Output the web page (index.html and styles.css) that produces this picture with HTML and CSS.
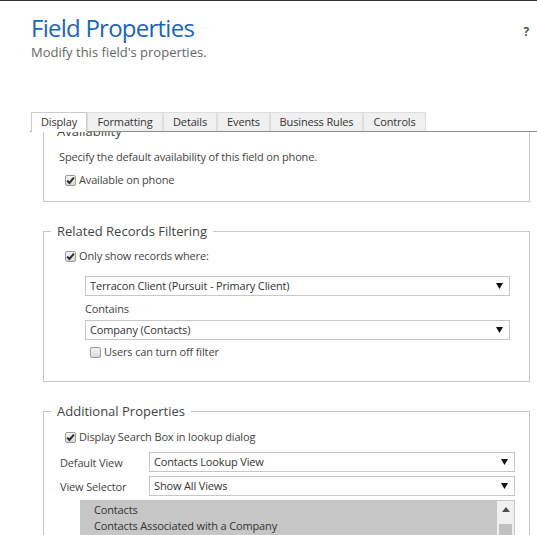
FILE: index.html
```html
<!DOCTYPE html>
<html>
<head>
<meta charset="utf-8">
<link rel="stylesheet" href="styles.css">
</head>
<body>
<div class="page">
  <header class="header">
    <div class="titles">
      <h1 class="title">Field Properties</h1>
      <p class="subtitle">Modify this field's properties.</p>
    </div>
    <span class="help">?</span>
  </header>

  <div class="tabs">
    <div class="tab tab-active tab-display">Display</div>
    <div class="tab tab-formatting">Formatting</div>
    <div class="tab tab-details">Details</div>
    <div class="tab tab-events">Events</div>
    <div class="tab tab-rules">Business Rules</div>
    <div class="tab tab-controls">Controls</div>
  </div>

  <div class="panel">
    <div class="scroller">
      <fieldset class="group group-availability">
        <legend class="legend">Availability</legend>
        <p class="note">Specify the default availability of this field on phone.</p>
        <label class="check check-phone">
          <span class="box box-checked"><svg viewBox="0 0 11 11" width="11" height="11"><path d="M2.2 5.6 L4.4 8 L8.9 2.6" fill="none" stroke="#2b2b2b" stroke-width="2"/></svg></span>
          <span>Available on phone</span>
        </label>
      </fieldset>

      <fieldset class="group group-filter">
        <legend class="legend">Related Records Filtering</legend>
        <label class="check check-only">
          <span class="box box-checked"><svg viewBox="0 0 11 11" width="11" height="11"><path d="M2.2 5.6 L4.4 8 L8.9 2.6" fill="none" stroke="#2b2b2b" stroke-width="2"/></svg></span>
          <span>Only show records where:</span>
        </label>
        <div class="filter-body">
          <div class="select">
            <span>Terracon Client (Pursuit - Primary Client)</span>
            <svg class="arrow" viewBox="0 0 7 6" width="7" height="6"><path d="M0 0 H7 L3.5 6 Z" fill="#111"/></svg>
          </div>
          <div class="label-contains">Contains</div>
          <div class="select">
            <span>Company (Contacts)</span>
            <svg class="arrow" viewBox="0 0 7 6" width="7" height="6"><path d="M0 0 H7 L3.5 6 Z" fill="#111"/></svg>
          </div>
          <label class="check check-small">
            <span class="box"></span>
            <span>Users can turn off filter</span>
          </label>
        </div>
      </fieldset>

      <fieldset class="group group-additional">
        <legend class="legend">Additional Properties</legend>
        <label class="check check-search">
          <span class="box box-checked"><svg viewBox="0 0 11 11" width="11" height="11"><path d="M2.2 5.6 L4.4 8 L8.9 2.6" fill="none" stroke="#2b2b2b" stroke-width="2"/></svg></span>
          <span>Display Search Box in lookup dialog</span>
        </label>
        <div class="form-row">
          <span class="form-label">Default View</span>
          <div class="select select-wide">
            <span>Contacts Lookup View</span>
            <svg class="arrow" viewBox="0 0 7 6" width="7" height="6"><path d="M0 0 H7 L3.5 6 Z" fill="#111"/></svg>
          </div>
        </div>
        <div class="form-row">
          <span class="form-label">View Selector</span>
          <div class="select select-wide">
            <span>Show All Views</span>
            <svg class="arrow" viewBox="0 0 7 6" width="7" height="6"><path d="M0 0 H7 L3.5 6 Z" fill="#111"/></svg>
          </div>
        </div>
        <div class="listbox">
          <ul class="list">
            <li>Contacts</li>
            <li>Contacts Associated with a Company</li>
            <li>Contacts Being Followed</li>
            <li>Contacts: No Campaign Activities in Last 3 Months</li>
          </ul>
          <div class="scrollbar">
            <svg class="scroll-up" viewBox="0 0 8 5" width="8" height="5"><path d="M0 5 H8 L4 0 Z" fill="#505050"/></svg>
            <div class="thumb"></div>
          </div>
        </div>
      </fieldset>
    </div>
  </div>
</div>
</body>
</html>
```

FILE: styles.css
```css
html, body {
  margin: 0;
  padding: 0;
  background: #fff;
}

body {
  font-family: "Open Sans", "Noto Sans", sans-serif;
  color: #444;
  font-size: 11px;
  letter-spacing: -0.15px;
}

.page {
  width: 537px;
  height: 535px;
  border-top: 1px solid #333;
  box-sizing: border-box;
  overflow: hidden;
  display: flex;
  flex-direction: column;
}

.header {
  display: flex;
  justify-content: space-between;
  padding: 0 8px 0 31px;
}

.title {
  margin: 12px 0 0 0;
  font-weight: 400;
  font-size: 24px;
  letter-spacing: -0.75px;
  line-height: 30px;
  color: #1c64b8;
}

.subtitle {
  margin: 0;
  font-size: 13px;
  letter-spacing: 0;
  line-height: 18px;
  color: #666;
}

.help {
  margin-top: 22px;
  font-weight: 700;
  font-size: 12px;
  color: #555;
}

.tabs {
  display: flex;
  margin: 51px 0 0 31px;
  position: relative;
  z-index: 1;
}

.tab {
  height: 19px;
  box-sizing: border-box;
  border: 1px solid #ddd;
  border-bottom: none;
  background: #f0f0f0;
  color: #333;
  font-size: 11px;
  line-height: 18px;
  text-align: center;
}

.tab-active {
  background: #fff;
  border-color: #ccc;
  height: 20px;
  margin-bottom: -1px;
}

.tab-display { width: 56px; }
.tab-formatting { width: 76px; }
.tab-details { width: 54px; }
.tab-events { width: 53px; }
.tab-rules { width: 93px; }
.tab-controls { width: 63px; }

.panel {
  margin-left: 30px;
  border-top: 1px solid #8c8c8c;
  flex: 1;
  overflow: hidden;
}

.scroller {
  margin-top: -10px;
  padding: 0 7px 0 13px;
}

.group {
  margin: 0 0 20px 0;
  padding: 0;
  border: 1px solid #c6c6c6;
  min-width: 0;
}

.legend {
  margin-left: 7px;
  padding: 0 6px;
  font-size: 13px;
  letter-spacing: 0;
  line-height: 18px;
  color: #444;
}

.note {
  margin: 9px 0 0 15px;
  line-height: 16px;
}

.check {
  display: flex;
  align-items: center;
  gap: 3px;
  margin-left: 21px;
  line-height: 16px;
}

.check-phone {
  margin-top: 7px;
  margin-bottom: 13px;
}

.box {
  width: 11px;
  height: 11px;
  box-sizing: border-box;
  border: 1px solid #9a9a9a;
  border-radius: 2px;
  background: linear-gradient(#f4f4f4, #d9d9d9);
  display: flex;
  align-items: center;
  justify-content: center;
  overflow: hidden;
}

.box svg {
  flex: none;
}

.check-only {
  margin-top: 8px;
}

.filter-body {
  padding: 12px 19px 21px 41px;
}

.select {
  height: 20px;
  box-sizing: border-box;
  border: 1px solid #c6c6c6;
  background: #fff;
  display: flex;
  align-items: center;
  justify-content: space-between;
  padding: 0 6px 0 4px;
  color: #333;
  line-height: 18px;
}

.label-contains {
  margin: 6px 0 4px 0;
  line-height: 14px;
}

.check-small {
  margin: 4px 0 0 5px;
}

.check-search {
  margin-top: 9px;
}

.form-row {
  display: flex;
  align-items: center;
  margin: 7px 14px 0 16px;
}

.form-row + .form-row {
  margin-top: 4px;
}

.form-label {
  width: 89px;
  flex: none;
}

.select-wide {
  flex: 1;
}

.listbox {
  margin: 4px 14px 0 36px;
  height: 60px;
  background: #c6c6c6;
  display: flex;
  overflow: hidden;
}

.list {
  list-style: none;
  margin: 0;
  padding: 2px 0 0 14px;
  flex: 1;
  color: #333;
  line-height: 16px;
}

.scrollbar {
  width: 17px;
  background: #f0f0f0;
  display: flex;
  flex-direction: column;
  align-items: center;
  margin: 1px 1px 0 0;
}

.scroll-up {
  margin-top: 6px;
}

.thumb {
  margin-top: 12px;
  width: 13px;
  height: 20px;
  background: #c1c1c1;
}
```
